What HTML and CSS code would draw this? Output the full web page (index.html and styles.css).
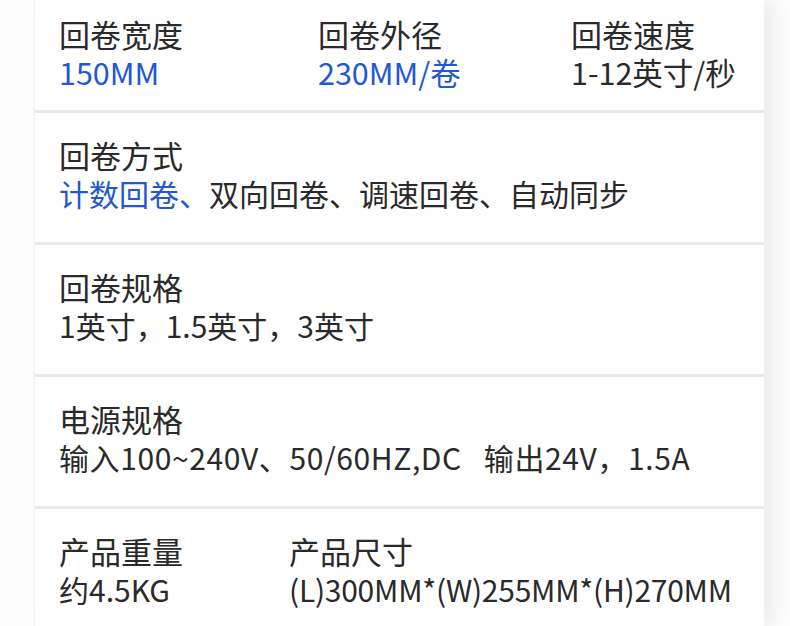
FILE: index.html
```html
<!DOCTYPE html>
<html lang="zh-CN">
<head>
<meta charset="utf-8">
<link rel="stylesheet" href="styles.css">
</head>
<body>
<div class="page">
  <div class="card">
    <section class="row row-first cols-3">
      <div class="item"><div class="label">回卷宽度</div><div class="value blue">150MM</div></div>
      <div class="item"><div class="label">回卷外径</div><div class="value blue">230MM/卷</div></div>
      <div class="item"><div class="label">回卷速度</div><div class="value">1-12英寸/秒</div></div>
    </section>
    <section class="row">
      <div class="label">回卷方式</div>
      <div class="value"><span class="blue">计数回卷、</span>双向回卷、调速回卷、自动同步</div>
    </section>
    <section class="row">
      <div class="label">回卷规格</div>
      <div class="value">1英寸，1.5英寸，3英寸</div>
    </section>
    <section class="row">
      <div class="label">电源规格</div>
      <div class="value wide">输入100~240V、50/60HZ,DC<span class="gap"></span>输出24V，1.5A</div>
    </section>
    <section class="row cols-2">
      <div class="item"><div class="label">产品重量</div><div class="value">约4.5KG</div></div>
      <div class="item"><div class="label">产品尺寸</div><div class="value tight">(L)300MM*(W)255MM*(H)270MM</div></div>
    </section>
  </div>
</div>
</body>
</html>
```
FILE: styles.css
```css
html, body {
  margin: 0;
  padding: 0;
  background: #ffffff;
}
body {
  font-family: "Noto Sans CJK SC", "Noto Sans", sans-serif;
  color: #2a2a2a;
  width: 790px;
  height: 626px;
  overflow: hidden;
}
.page {
  padding-left: 34px;
  background: #fdfdfd;
  height: 626px;
}
.card {
  width: 729px;
  height: 626px;
  background: #ffffff;
  border-left: 1px solid #f0f0f0;
  box-shadow: 10px 0 18px rgba(0, 0, 0, 0.07);
}
.row {
  padding: 23px 24px 30px;
  border-bottom: 3px solid #e9e9e9;
  line-height: 38px;
}
.row-first {
  padding-top: 15px;
  padding-bottom: 19px;
}
.cols-3 {
  display: grid;
  grid-template-columns: 259px 253px 1fr;
}
.cols-2 {
  display: grid;
  grid-template-columns: 230px 1fr;
  border-bottom: none;
}
.label, .value {
  white-space: nowrap;
}
.label {
  font-size: 31px;
}
.value {
  font-size: 30px;
}
.row-first .value {
  font-size: 30.5px;
}
.wide {
  letter-spacing: 0.6px;
}
.tight {
  letter-spacing: -0.25px;
}
.gap {
  display: inline-block;
  width: 22px;
}
.blue {
  color: #2257d6;
}
```
